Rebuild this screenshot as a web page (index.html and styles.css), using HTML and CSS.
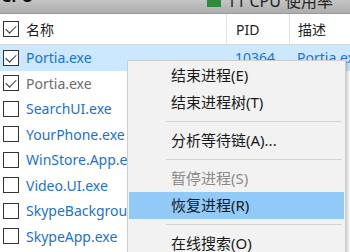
FILE: index.html
```html
<!DOCTYPE html>
<html>
<head>
<meta charset="utf-8">
<link rel="stylesheet" href="styles.css">
</head>
<body>
<div class="screen">
  <div class="topbar">
    <span class="top-left">CPU</span>
    <span class="top-right"><span class="gicon"></span>11 CPU 使用率</span>
  </div>
  <div class="header">
    <div class="col-name"><span class="cb checked"></span><span>名称</span></div>
    <div class="col-pid">PID</div>
    <div class="col-desc">描述</div>
  </div>
  <div class="rows">
    <div class="row selected">
      <div class="col-name"><span class="cb checked"></span><span class="lnk">Portia.exe</span></div>
      <div class="col-pid lnk">10364</div>
      <div class="col-desc lnk">Portia.exe</div>
    </div>
    <div class="row">
      <div class="col-name"><span class="cb checked"></span><span class="dim">Portia.exe</span></div>
    </div>
    <div class="row"><div class="col-name"><span class="cb"></span><span class="lnk">SearchUI.exe</span></div></div>
    <div class="row"><div class="col-name"><span class="cb"></span><span class="lnk">YourPhone.exe</span></div></div>
    <div class="row"><div class="col-name"><span class="cb"></span><span class="lnk">WinStore.App.exe</span></div></div>
    <div class="row"><div class="col-name"><span class="cb"></span><span class="lnk">Video.UI.exe</span></div></div>
    <div class="row"><div class="col-name"><span class="cb"></span><span class="lnk">SkypeBackgroundHost.exe</span></div></div>
    <div class="row"><div class="col-name"><span class="cb"></span><span class="lnk">SkypeApp.exe</span></div></div>
  </div>

  <div class="menu">
    <div class="mi">结束进程(E)</div>
    <div class="mi">结束进程树(T)</div>
    <div class="sep"></div>
    <div class="mi">分析等待链(A)...</div>
    <div class="sep"></div>
    <div class="mi disabled">暂停进程(S)</div>
    <div class="mi hot">恢复进程(R)</div>
    <div class="sep"></div>
    <div class="mi">在线搜索(O)</div>
  </div>
</div>
</body>
</html>
```

FILE: styles.css
```css
* { box-sizing: border-box; }
html, body { margin: 0; padding: 0; }
body {
  width: 350px;
  height: 252px;
  overflow: hidden;
  background: #ffffff;
  font-family: "Noto Sans", "Noto Sans CJK SC", sans-serif;
  font-size: 14px;
  color: #1e1e1e;
}
.screen { position: relative; width: 350px; height: 252px; overflow: hidden; }

.topbar {
  height: 14px;
  background: linear-gradient(#c4c4c4, #adadad);
  border-bottom: 1px solid #9a9a9a;
  display: flex;
  justify-content: space-between;
  overflow: hidden;
  font-size: 16px;
  line-height: 16px;
}
.top-left { font-weight: bold; margin-top: -12px; padding-left: 1px; color: #111; }
.top-right { margin-top: -11px; padding-right: 5px; display: flex; align-items: center; gap: 6px; color: #222; width: 143px; }
.gicon { width: 14px; height: 12px; background: #2e8b3a; display: inline-block; }

.header, .row {
  display: flex;
  align-items: center;
  white-space: nowrap;
}
.header {
  height: 31px;
  border-bottom: 1px solid #d8d8d8;
  color: #222;
}
.col-name {
  width: 226px;
  display: flex;
  align-items: center;
  gap: 7px;
  padding-left: 3px;
  overflow: hidden;
  height: 100%;
}
.col-pid {
  width: 63px;
  padding-left: 9px;
  height: 100%;
  display: flex;
  align-items: center;
  overflow: hidden;
}
.col-desc {
  flex: 1;
  padding-left: 8px;
  height: 100%;
  display: flex;
  align-items: center;
  overflow: hidden;
}
.header .col-pid, .header .col-desc { border-left: 1px solid #e3e3e3; }

.row { height: 25.5px; }
.row.selected { background: #cce8ff; }

.cb {
  flex: none;
  width: 16px;
  height: 16px;
  border: 1px solid #333;
  background: #fff;
  position: relative;
}
.cb.checked::after {
  content: "";
  position: absolute;
  left: 4px;
  top: 1px;
  width: 5px;
  height: 9px;
  border: solid #333;
  border-width: 0 1.5px 1.5px 0;
  transform: rotate(45deg);
}
.lnk { color: #1a72d4; }
.dim { color: #6d6d6d; }

.menu {
  position: absolute;
  left: 127px;
  top: 60px;
  width: 219px;
  height: 210px;
  background: #f2f2f2;
  border: 1px solid #cfcfcf;
  box-shadow: 2px 2px 3px rgba(0,0,0,0.2);
  padding: 1px 1px;
  font-size: 15px;
  color: #1a1a1a;
}
.mi {
  height: 27px;
  line-height: 27px;
  padding-left: 42px;
}
.mi.disabled { color: #8a8a8a; }
.mi.hot { background: #91c9f7; }
.sep {
  height: 11px;
  display: flex;
  align-items: center;
  margin-left: 37px;
  margin-right: 2px;
}
.sep::before {
  content: "";
  flex: 1;
  height: 1px;
  background: #d4d4d4;
}
```
